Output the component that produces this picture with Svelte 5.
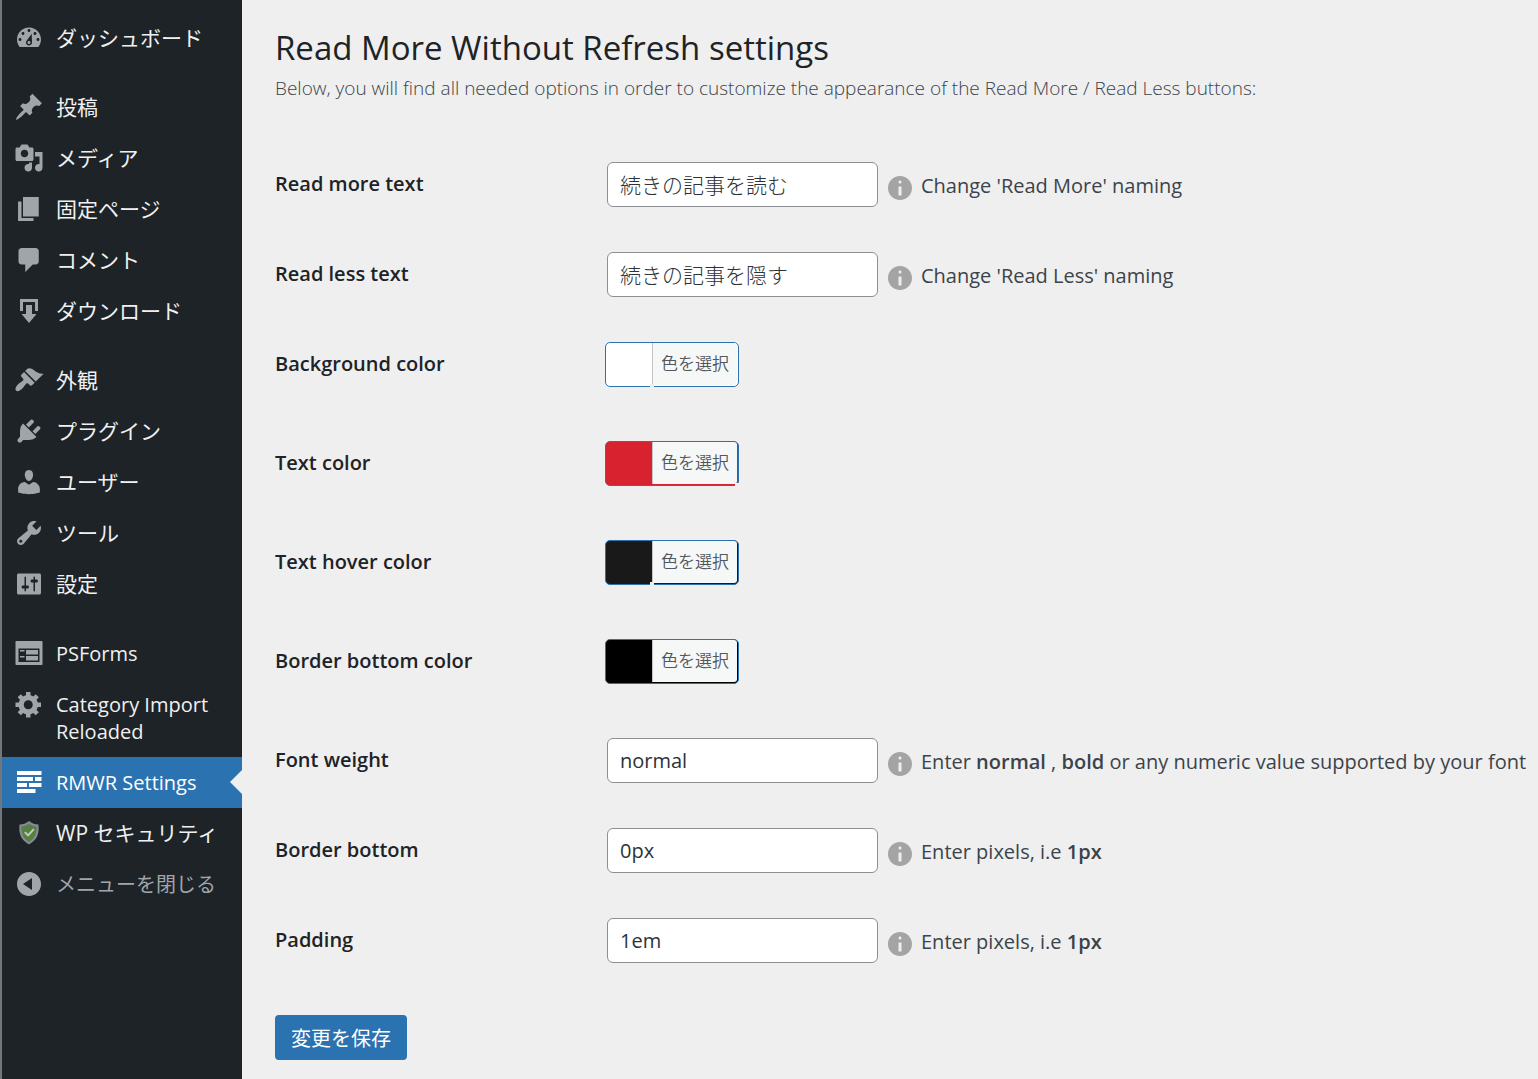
<script>
    const groups = [
        [
            { label: 'ダッシュボード', icon: 'dashboard' }
        ],
        [
            { label: '投稿', icon: 'post' },
            { label: 'メディア', icon: 'media' },
            { label: '固定ページ', icon: 'page' },
            { label: 'コメント', icon: 'comments' },
            { label: 'ダウンロード', icon: 'download' }
        ],
        [
            { label: '外観', icon: 'appearance' },
            { label: 'プラグイン', icon: 'plugins' },
            { label: 'ユーザー', icon: 'users' },
            { label: 'ツール', icon: 'tools' },
            { label: '設定', icon: 'settings' }
        ],
        [
            { label: 'PSForms', icon: 'feedback' },
            { label: 'Category Import Reloaded', icon: 'generic' },
            { label: 'RMWR Settings', icon: 'rmwr', current: true },
            { label: 'WP セキュリティ', icon: 'shield' }
        ]
    ];

    const icons = {
        dashboard: 'M3.76 16h12.48C17.34 14.63 18 12.89 18 11c0-4.41-3.58-8-8-8s-8 3.59-8 8c0 1.89.66 3.63 1.76 5zM10 4c.55 0 1 .45 1 1s-.45 1-1 1-1-.45-1-1 .45-1 1-1zM6 6c.55 0 1 .45 1 1s-.45 1-1 1-1-.45-1-1 .45-1 1-1zm8 0c.55 0 1 .45 1 1s-.45 1-1 1-1-.45-1-1 .45-1 1-1zm-2.2 1.2l.2 5.8c0 1.1-.9 2-2 2s-2-.9-2-2c0-.57.24-1.08.63-1.45zM10 12c-.55 0-1 .45-1 1s.45 1 1 1 1-.45 1-1-.45-1-1-1zM4 10c.55 0 1 .45 1 1s-.45 1-1 1-1-.45-1-1 .45-1 1-1zm12 0c.55 0 1 .45 1 1s-.45 1-1 1-1-.45-1-1 .45-1 1-1z',
        post: 'M10.44 3.02l1.82-1.82 6.36 6.35-1.83 1.82c-1.05-.68-2.48-.57-3.41.36l-.75.75c-.92.93-1.04 2.35-.35 3.41l-1.83 1.82-2.41-2.41-2.8 2.79c-.42.42-3.38 2.71-3.8 2.29s1.86-3.39 2.28-3.81l2.79-2.79L4.1 9.36l1.83-1.82c1.05.69 2.48.57 3.4-.36l.75-.75c.93-.92 1.05-2.35.36-3.41z',
        media: 'M13 11V4c0-.55-.45-1-1-1h-1.67L9 1H5L3.67 3H2c-.55 0-1 .45-1 1v7c0 .55.45 1 1 1h10c.55 0 1-.45 1-1zM7 4.5c1.38 0 2.5 1.12 2.5 2.5S8.38 9.5 7 9.5 4.5 8.38 4.5 7 5.62 4.5 7 4.5zM14 6h5v10.5c0 1.38-1.12 2.5-2.5 2.5S14 17.88 14 16.5s1.12-2.5 2.5-2.5c.17 0 .34.02.5.05V9h-3V6zm-4 8.05V13h2v3.5c0 1.38-1.12 2.5-2.5 2.5S7 17.88 7 16.5 8.12 14 9.5 14c.17 0 .34.02.5.05z',
        page: 'M6 15V2h10.5v13H6zm-1 1h8v2H2.7V5H5v11z',
        comments: 'M5 2h9.5c1.1 0 2 .9 2 2v7c0 1.1-.9 2-2 2h-2l-5 5v-5H5c-1.1 0-2-.9-2-2V4c0-1.1.9-2 2-2z',
        download: 'M14.01 4v6h2V2H4v8h2.01V4h8zm-2 2v6h3l-5 6-5-6h3V6h4z',
        appearance: 'M14.48 11.06L7.41 3.99l1.5-1.5c.5-.56 2.3-.47 3.51.32 1.21.8 1.43 1.28 2.91 2.1 1.18.64 2.45 1.26 4.45.85zm-.71.71L6.7 4.7 4.93 6.47c-.39.39-.39 1.02 0 1.41l1.06 1.06c.39.39.39 1.03 0 1.42-.6.6-1.43 1.11-2.21 1.69-.35.26-.7.53-1.01.84C1.43 14.23.4 16.08 1.4 17.07c.99 1 2.84-.03 4.18-1.36.31-.31.58-.66.85-1.02.57-.78 1.08-1.61 1.69-2.21.39-.39 1.02-.39 1.41 0l1.06 1.06c.39.39 1.02.39 1.41 0z',
        plugins: 'M13.11 4.36L9.87 7.6 8 5.73l3.24-3.24c.35-.34 1.05-.2 1.56.32.52.51.66 1.21.31 1.55zm-8 1.77l.91-1.12 9.01 9.01-1.19.84c-.71.71-2.63 1.16-3.82 1.16H6.14L4.9 17.26c-.59.59-1.54.59-2.12 0-.59-.58-.59-1.53 0-2.12l1.24-1.24v-3.88c0-1.13.4-3.19 1.09-3.89zm7.26 3.97l3.24-3.24c.34-.35 1.04-.21 1.55.31.52.51.66 1.21.31 1.55l-3.24 3.25z',
        users: 'M10 9.25c-2.27 0-2.73-3.44-2.73-3.44C7 4.02 7.82 2 9.97 2c2.16 0 2.98 2.02 2.71 3.81 0 0-.41 3.44-2.68 3.44zm0 2.57L12.72 10c2.39 0 4.52 2.33 4.52 4.53v2.49s-3.65 1.13-7.24 1.13c-3.65 0-7.24-1.13-7.24-1.13v-2.49c0-2.25 1.94-4.48 4.47-4.48z',
        tools: 'M16.68 9.77c-1.34 1.34-3.3 1.67-4.95.99l-5.41 6.52c-.99.99-2.59.99-3.58 0s-.99-2.59 0-3.57l6.52-5.42c-.68-1.65-.35-3.61.99-4.95 1.28-1.28 3.12-1.62 4.72-1.06l-2.89 2.89 2.82 2.82 2.86-2.87c.53 1.58.18 3.39-1.08 4.65zM3.81 16.21c.4.39 1.04.39 1.43 0 .4-.4.4-1.04 0-1.43-.39-.4-1.03-.4-1.43 0-.39.39-.39 1.03 0 1.43z',
        settings: 'M18 16V4c0-.55-.45-1-1-1H3c-.55 0-1 .45-1 1v12c0 .55.45 1 1 1h14c.55 0 1-.45 1-1zM8 11h1c.55 0 1 .45 1 1s-.45 1-1 1H8v1.5c0 .28-.22.5-.5.5s-.5-.22-.5-.5V13H6c-.55 0-1-.45-1-1s.45-1 1-1h1V5.5c0-.28.22-.5.5-.5s.5.22.5.5V11zm5-2h-1c-.55 0-1-.45-1-1s.45-1 1-1h1V5.5c0-.28.22-.5.5-.5s.5.22.5.5V7h1c.55 0 1 .45 1 1s-.45 1-1 1h-1v5.5c0 .28-.22.5-.5.5s-.5-.22-.5-.5V9z',
        feedback: 'M1.5 2h17c.3 0 .5.2.5.5v15c0 .3-.2.5-.5.5h-17c-.3 0-.5-.2-.5-.5v-15c0-.3.2-.5.5-.5zM17 16V7H3v9h14zM4 8v1h3V8H4zm4 0v3h8V8H8zm-4 4v1h3v-1H4zm4 0v3h8v-3H8z',
        generic: 'M18 12h-2.18c-.17.7-.44 1.35-.81 1.93l1.54 1.54-2.1 2.1-1.54-1.54c-.58.36-1.23.63-1.91.79V19H8v-2.18c-.68-.16-1.33-.43-1.91-.79l-1.54 1.54-2.12-2.12 1.54-1.54c-.36-.58-.63-1.23-.79-1.91H1V9.03h2.17c.16-.7.44-1.35.8-1.94L2.43 5.55l2.1-2.1 1.54 1.54c.58-.37 1.24-.64 1.93-.81V2h3v2.18c.68.16 1.33.43 1.91.79l1.54-1.54 2.12 2.12-1.54 1.54c.36.59.64 1.24.8 1.94H18V12zm-8.5 1.5c1.66 0 3-1.34 3-3s-1.34-3-3-3-3 1.34-3 3 1.34 3 3 3z',
        rmwr: 'M2 2.67h16.33v2.66H2zM2 6.67h10.67v2.66H2zM14 6.67h4.33v2.66H14zM2 10.67h6.67v2.66H2zM10 10.67h8.33v2.66H10zM2 14.67h12.33v2.66H2z',
        collapse: 'M10 2c4.42 0 8 3.58 8 8s-3.58 8-8 8-8-3.58-8-8 3.58-8 8-8zm2 4l-6 4 6 4V6z',
        info: 'M10 2c4.42 0 8 3.58 8 8s-3.58 8-8 8-8-3.58-8-8 3.58-8 8-8zm1 4c0-.55-.45-1-1-1s-1 .45-1 1 .45 1 1 1 1-.45 1-1zm0 9V9H9v6h2z'
    };

    let fields = $state([
        { id: 'rm_text', label: 'Read more text', value: '続きの記事を読む', hint: "Change 'Read More' naming" },
        { id: 'rl_text', label: 'Read less text', value: '続きの記事を隠す', hint: "Change 'Read Less' naming" },
        { id: 'background_color', label: 'Background color', color: '#ffffff', notch: 'left' },
        { id: 'text_color', label: 'Text color', color: '#d9222f', notch: 'right' },
        { id: 'text_hover_color', label: 'Text hover color', color: '#191919', notch: 'left' },
        { id: 'border_bottom_color', label: 'Border bottom color', color: '#000000' },
        { id: 'font_weight', label: 'Font weight', value: 'normal', hint: 'Enter <strong>normal</strong> , <strong>bold</strong> or any numeric value supported by your font' },
        { id: 'border_bottom', label: 'Border bottom', value: '0px', hint: 'Enter pixels, i.e <strong>1px</strong>' },
        { id: 'padding', label: 'Padding', value: '1em', hint: 'Enter pixels, i.e <strong>1px</strong>' }
    ]);

    function isLatin(text) {
        return /^[\x00-\x7F]*$/.test(text);
    }
</script>

{#snippet icon(name)}
    <svg class="icon" viewBox="0 0 20 20" aria-hidden="true">
        {#if name === 'shield'}
            <path d="M10 2c2 1.6 4 2.3 6.3 2.4.7 5.6-.7 10.4-6.3 13.2C4.4 14.8 3 10 3.7 4.4 6 4.3 8 3.6 10 2z" fill="#85889a" />
            <path d="M10 3.8c1.6 1.1 3.2 1.7 5 1.9.2 4.3-1 8-5 10.3-4-2.3-5.2-6-5-10.3 1.8-.2 3.4-.8 5-1.9z" fill="#55803f" />
            <path d="M7.2 9.4l2.2 2.2 3.8-4.2" fill="none" stroke="#c3ccc0" stroke-width="1.3" />
        {:else}
            <path d={icons[name]} fill="currentColor" />
        {/if}
    </svg>
{/snippet}

<div class="admin">
    <nav class="menu">
        {#each groups as group}
            <ul>
                {#each group as item}
                    <li>
                        <a href="#{item.icon}" class:current={item.current} class:latin={isLatin(item.label)} aria-current={item.current ? 'page' : undefined}>
                            {@render icon(item.icon)}
                            <span>{item.label}</span>
                        </a>
                    </li>
                {/each}
            </ul>
        {/each}
        <button type="button" class="collapse">
            {@render icon('collapse')}
            <span>メニューを閉じる</span>
        </button>
    </nav>

    <main>
        <h1>Read More Without Refresh settings</h1>
        <p>Below, you will find all needed options in order to customize the appearance of the Read More / Read Less buttons:</p>

        <form onsubmit={e => e.preventDefault()}>
            <table>
                <tbody>
                    {#each fields as field}
                        <tr>
                            <th scope="row"><label for={field.id}>{field.label}</label></th>
                            <td>
                                {#if field.color}
                                    <button type="button" id={field.id} class="color-button {field.notch ? 'notch-' + field.notch : ''}" style:background-color={field.color}>
                                        <span>色を選択</span>
                                    </button>
                                {:else}
                                    <div class="field">
                                        <input type="text" id={field.id} class:latin={isLatin(field.value)} bind:value={field.value}>
                                        <span class="info">{@render icon('info')}</span>
                                        <span class="hint">{@html field.hint}</span>
                                    </div>
                                {/if}
                            </td>
                        </tr>
                    {/each}
                </tbody>
            </table>
            <button type="submit" class="save">変更を保存</button>
        </form>
    </main>
</div>

<style>
    :global(body) {
        margin: 0;
        background: #efefef;
    }

    .admin {
        display: flex;
        min-height: 100vh;
        color: #3c434a;
        font-family: "Open Sans", "Noto Sans CJK JP", sans-serif;
        font-size: 20px;
        line-height: 27px;
    }

    button, input {
        font-family: inherit;
    }

    .menu {
        box-sizing: border-box;
        flex: 0 0 242px;
        padding-top: 13px;
        border-left: 2px solid #72777c;
        background: #1d2327;
    }

    .menu ul {
        margin: 0 0 18px;
        padding: 0;
        list-style: none;
    }

    .menu ul:last-of-type {
        margin-bottom: 0;
    }

    .menu a, .collapse {
        position: relative;
        display: flex;
        align-items: flex-start;
        gap: 12px;
        box-sizing: border-box;
        width: 100%;
        padding: 12px;
        border: 0;
        background: none;
        color: #f0f0f1;
        font-size: 21px;
        line-height: 27px;
        text-align: left;
        text-decoration: none;
    }

    .menu .latin {
        font-size: 20px;
    }

    .menu .icon {
        flex: none;
        width: 30px;
        height: 30px;
        margin: -2px 0 -1px;
        color: #a0a5aa;
    }

    .menu .current {
        background: #2b72b0;
        color: #fff;
    }

    .menu .current .icon {
        color: #fff;
    }

    .menu .current::after {
        content: "";
        position: absolute;
        top: 13px;
        right: 0;
        width: 12px;
        height: 24px;
        background: #efefef;
        clip-path: polygon(100% 0, 100% 100%, 0 50%);
    }

    .menu .collapse {
        color: #a0a5aa;
        font-size: 20px;
    }

    main {
        flex: 1;
        min-width: 0;
        padding: 24px 8px 19px 33px;
    }

    h1 {
        margin: 0;
        color: #1d2327;
        font-size: 33px;
        font-weight: 375;
        line-height: 48px;
    }

    p {
        margin: 3px 0 38px;
        font-size: 19px;
        font-weight: 350;
    }

    table {
        width: 100%;
        border-collapse: collapse;
    }

    th {
        width: 330px;
        padding: 30px 0 22px;
        color: #1d2327;
        font-weight: 600;
        text-align: left;
        vertical-align: top;
    }

    td {
        padding: 22px 0 23px;
        vertical-align: top;
    }

    .field {
        display: flex;
        align-items: center;
        padding-left: 2px;
    }

    input {
        box-sizing: border-box;
        width: 271px;
        height: 45px;
        padding: 0 12px 2px;
        border: 1px solid #8c8f94;
        border-radius: 6px;
        background: #fff;
        color: #2c3338;
        font-size: 21px;
        font-weight: 300;
    }

    input.latin {
        padding-bottom: 0;
        font-size: 20px;
        font-weight: 400;
    }

    .info {
        display: flex;
        margin: 6px 6px 0 7px;
        color: #a4a4a4;
    }

    .info .icon {
        width: 30px;
        height: 30px;
    }

    .hint {
        padding-top: 1px;
        font-weight: 375;
    }

    .hint :global(strong) {
        font-weight: 600;
    }

    .color-button {
        position: relative;
        display: block;
        height: 45px;
        margin-bottom: 9px;
        padding: 0 1px 1px 46px;
        border: 1px solid #2b72b0;
        border-radius: 5px;
    }

    .color-button span {
        display: block;
        padding: 0 8px;
        border-left: 1px solid #c3c4c7;
        border-radius: 0 3px 3px 0;
        background: #f6f7f7;
        color: #50575e;
        font-size: 17px;
        font-weight: 350;
        line-height: 42px;
    }

    .notch-left::after, .notch-right::after {
        content: "";
        position: absolute;
        bottom: -1px;
        left: 44px;
        width: 4px;
        height: 3px;
        background: #efefef;
    }

    .notch-right::after {
        right: -1px;
        left: auto;
    }

    .save {
        display: block;
        height: 45px;
        margin-top: 29px;
        padding: 0 16px;
        border: 0;
        border-radius: 4px;
        background: #2b72b0;
        color: #fff;
        font-size: 20px;
    }
</style>
